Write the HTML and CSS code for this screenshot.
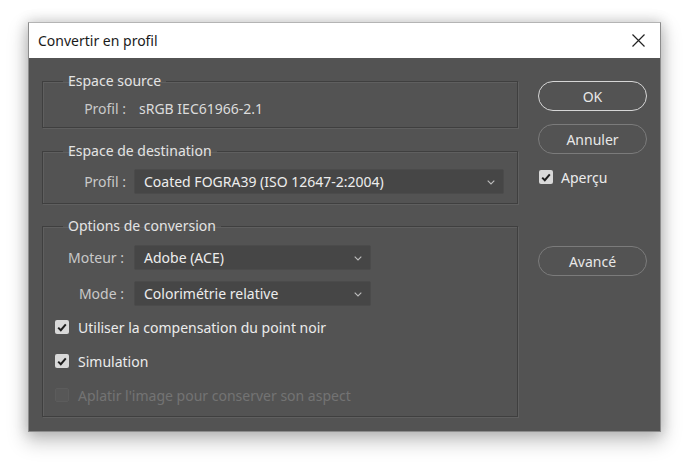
FILE: index.html
```html
<!DOCTYPE html>
<html lang="fr">
<head>
<meta charset="utf-8">
<title>Convertir en profil</title>
<link rel="stylesheet" href="styles.css">
</head>
<body>
<div class="window">
  <div class="titlebar">
    <span class="title">Convertir en profil</span>
    <span class="close"><svg width="13" height="13" viewBox="0 0 13 13"><path d="M0.5 0.5 L12.5 12.5 M12.5 0.5 L0.5 12.5" stroke="#222" stroke-width="1.2" fill="none"/></svg></span>
  </div>
  <div class="content">
    <div class="main">
      <fieldset class="group g-source">
        <legend>Espace source</legend>
        <div class="row">
          <span class="label">Profil :</span>
          <span class="value">sRGB IEC61966-2.1</span>
        </div>
      </fieldset>
      <fieldset class="group g-dest">
        <legend>Espace de destination</legend>
        <div class="row">
          <span class="label">Profil :</span>
          <div class="select wide"><span>Coated FOGRA39 (ISO 12647-2:2004)</span><svg class="chev" width="8" height="5" viewBox="0 0 8 5"><path d="M0.7 0.7 L4 4 L7.3 0.7" stroke="#bdbdbd" stroke-width="1.1" fill="none"/></svg></div>
        </div>
      </fieldset>
      <fieldset class="group g-opts">
        <legend>Options de conversion</legend>
        <div class="row">
          <span class="label">Moteur :</span>
          <div class="select short"><span>Adobe (ACE)</span><svg class="chev" width="8" height="5" viewBox="0 0 8 5"><path d="M0.7 0.7 L4 4 L7.3 0.7" stroke="#bdbdbd" stroke-width="1.1" fill="none"/></svg></div>
        </div>
        <div class="row row-mode">
          <span class="label">Mode :</span>
          <div class="select short"><span>Colorimétrie relative</span><svg class="chev" width="8" height="5" viewBox="0 0 8 5"><path d="M0.7 0.7 L4 4 L7.3 0.7" stroke="#bdbdbd" stroke-width="1.1" fill="none"/></svg></div>
        </div>
        <div class="check first">
          <span class="box on"><svg width="10" height="9" viewBox="0 0 10 9"><path d="M1.2 4.6 L3.8 7.2 L8.8 1.4" stroke="#1e1e1e" stroke-width="2" fill="none"/></svg></span>
          <span>Utiliser la compensation du point noir</span>
        </div>
        <div class="check">
          <span class="box on"><svg width="10" height="9" viewBox="0 0 10 9"><path d="M1.2 4.6 L3.8 7.2 L8.8 1.4" stroke="#1e1e1e" stroke-width="2" fill="none"/></svg></span>
          <span>Simulation</span>
        </div>
        <div class="check disabled">
          <span class="box off"></span>
          <span>Aplatir l'image pour conserver son aspect</span>
        </div>
      </fieldset>
    </div>
    <div class="side">
      <button class="btn default">OK</button>
      <button class="btn">Annuler</button>
      <div class="check preview">
        <span class="box on"><svg width="10" height="9" viewBox="0 0 10 9"><path d="M1.2 4.6 L3.8 7.2 L8.8 1.4" stroke="#1e1e1e" stroke-width="2" fill="none"/></svg></span>
        <span>Aperçu</span>
      </div>
      <button class="btn advanced">Avancé</button>
    </div>
  </div>
</div>
</body>
</html>
```

FILE: styles.css
```css
* { box-sizing: border-box; }

html, body {
  margin: 0;
  background: #ffffff;
}

body {
  min-height: 464px;
  padding: 22px 0 0 28px;
  font-family: "Segoe UI", "Noto Sans", "Open Sans", sans-serif;
  font-size: 14px;
}

.window {
  width: 633px;
  height: 410px;
  background: #535353;
  border: 1px solid #8c8c8c;
  border-top-color: #b4b4b4;
  box-shadow: 0 8px 18px 2px rgba(0, 0, 0, 0.22), 0 0 12px 1px rgba(0, 0, 0, 0.16);
  display: flex;
  flex-direction: column;
}

.titlebar {
  height: 35px;
  background: #ffffff;
  display: flex;
  align-items: center;
  justify-content: space-between;
  padding: 0 15px 0 9px;
}

.title {
  font-size: 14px;
  color: #1a1a1a;
}

.close {
  display: flex;
  align-items: center;
}

.content {
  display: flex;
  gap: 20px;
  padding: 13px 13px 0 13px;
}

.main {
  width: 476px;
  display: flex;
  flex-direction: column;
}

.group {
  margin: 0;
  min-width: 0;
  border: 1px solid #3f3f3f;
  box-shadow: inset 1px 1px 0 #5f5f5f, 1px 1px 0 #5f5f5f;
  padding: 7px 0 9px 0;
}

.group legend {
  margin-left: 20px;
  padding: 0 5px;
  line-height: 20px;
  color: #e4e4e4;
  font-size: 14px;
}

.g-dest { margin-top: 13px; padding: 8px 0 9px 0; }
.g-opts { margin-top: 12px; padding: 9px 0 11px 0; }

.row {
  display: flex;
  align-items: center;
  gap: 8px;
  height: 20px;
  color: #e6e6e6;
}

.g-dest .row, .g-opts .row { height: 25px; }
.row-mode { margin-top: 11px; }

.label {
  width: 83px;
  text-align: right;
  color: #c9c9c9;
}

.g-opts .label { width: 81px; }
.g-opts .row { gap: 10px; }

.value {
  margin-left: 5px;
  color: #dcdcdc;
}

.select {
  height: 25px;
  background: #464646;
  border: 1px solid #4b4b4b;
  border-radius: 2px;
  display: flex;
  align-items: center;
  justify-content: space-between;
  padding: 0 8px 0 9px;
  color: #ededed;
}

.select.wide { width: 370px; }
.select.short { width: 237px; }

.chev { margin-top: 2px; }

.check {
  display: flex;
  align-items: center;
  gap: 9px;
  height: 20px;
  padding-left: 12px;
  color: #ececec;
  margin-top: 14px;
}

.check.first { margin-top: 11px; }

.box {
  width: 14px;
  height: 14px;
  border-radius: 2px;
  display: flex;
  align-items: center;
  justify-content: center;
}

.box.on { background: #d9d9d9; }
.box.off { background: #575757; border: 1px solid #5c5c5c; }

.check.disabled { color: #737373; }

.side {
  width: 109px;
  display: flex;
  flex-direction: column;
  padding-top: 10px;
}

.btn {
  height: 30px;
  width: 109px;
  border-radius: 15px;
  background: transparent;
  border: 1px solid #7b7b7b;
  color: #e8e8e8;
  font-family: inherit;
  font-size: 14px;
  padding: 0;
  margin: 13px 0 0 0;
}

.btn.default {
  margin-top: 0;
  border: 1.5px solid #d6d6d6;
}

.check.preview {
  padding-left: 1px;
  margin-top: 13px;
  gap: 8px;
}

.btn.advanced { margin-top: 59px; }
```
